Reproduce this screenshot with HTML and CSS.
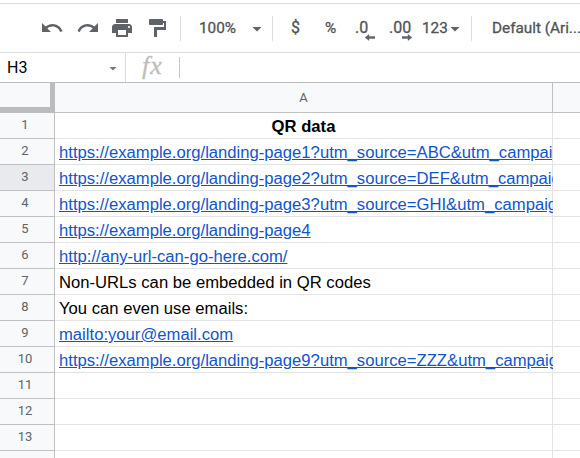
FILE: index.html
```
<!DOCTYPE html>
<html lang="en">
<head>
<meta charset="utf-8">
<title>Spreadsheet</title>
<link rel="stylesheet" href="styles.css">
</head>
<body>
<div class="toolbar">
  <svg class="icon undo" viewBox="0 0 24 24"><path d="M12.5 8c-2.65 0-5.05.99-6.9 2.6L2 7v9h9l-3.62-3.62c1.39-1.16 3.16-1.88 5.12-1.88 3.54 0 6.55 2.31 7.6 5.5l2.37-.78C21.08 11.03 17.15 8 12.5 8z"/></svg>
  <svg class="icon redo" viewBox="0 0 24 24"><path d="M18.4 10.6C16.55 8.99 14.15 8 11.5 8c-4.65 0-8.58 3.03-9.96 7.22L3.9 16c1.05-3.19 4.05-5.5 7.6-5.5 1.95 0 3.73.72 5.12 1.88L13 16h9V7l-3.6 3.6z"/></svg>
  <svg class="icon print" viewBox="0 0 24 24"><path d="M19 8H5c-1.66 0-3 1.34-3 3v6h4v4h12v-4h4v-6c0-1.66-1.34-3-3-3zm-3 11H8v-5h8v5zm3-7c-.55 0-1-.45-1-1s.45-1 1-1 1 .45 1 1-.45 1-1 1zm-1-9H6v4h12V3z"/></svg>
  <svg class="icon paint" viewBox="0 0 24 24"><path d="M18 5V4c0-.55-.45-1-1-1H5c-.55 0-1 .45-1 1v4c0 .55.45 1 1 1h12c.55 0 1-.45 1-1V7h1v4H9v10h3v-7h9V5h-3z"/></svg>
  <i class="divider"></i>
  <span class="label zoom">100%</span><i class="caret"></i>
  <i class="divider after-zoom"></i>
  <span class="label currency">$</span>
  <span class="label percent">%</span>
  <span class="label less">.0<svg class="arrow" viewBox="0 0 10 6"><path d="M0 3l4-3v2h6v2H4v2z"/></svg></span>
  <span class="label more">.00<svg class="arrow" viewBox="0 0 10 6"><path d="M10 3L6 0v2H0v2h6v2z"/></svg></span>
  <span class="label formats">123</span><i class="caret"></i>
  <i class="divider after-formats"></i>
  <span class="label font">Default (Ari...</span>
</div>
<div class="formula-bar">
  <span class="cell-name">H3</span><i class="caret small"></i>
  <i class="name-divider"></i>
  <span class="fx">fx</span>
  <i class="fx-divider"></i>
</div>
<div class="sheet">
  <div class="corner"></div><div class="col-head">A</div><div class="col-head"></div>
  <div class="row-head">1</div><div class="cell title">QR data</div><div class="cell"></div>
  <div class="row-head">2</div><div class="cell"><a>https://example.org/landing-page1?utm_source=ABC&amp;utm_campaig</a></div><div class="cell"></div>
  <div class="row-head active">3</div><div class="cell"><a>https://example.org/landing-page2?utm_source=DEF&amp;utm_campaig</a></div><div class="cell"></div>
  <div class="row-head">4</div><div class="cell"><a>https://example.org/landing-page3?utm_source=GHI&amp;utm_campaig</a></div><div class="cell"></div>
  <div class="row-head">5</div><div class="cell"><a>https://example.org/landing-page4</a></div><div class="cell"></div>
  <div class="row-head">6</div><div class="cell"><a>http://any-url-can-go-here.com/</a></div><div class="cell"></div>
  <div class="row-head">7</div><div class="cell">Non-URLs can be embedded in QR codes</div><div class="cell"></div>
  <div class="row-head">8</div><div class="cell">You can even use emails:</div><div class="cell"></div>
  <div class="row-head">9</div><div class="cell"><a>mailto:your@email.com</a></div><div class="cell"></div>
  <div class="row-head">10</div><div class="cell"><a>https://example.org/landing-page9?utm_source=ZZZ&amp;utm_campaig</a></div><div class="cell"></div>
  <div class="row-head">11</div><div class="cell"></div><div class="cell"></div>
  <div class="row-head">12</div><div class="cell"></div><div class="cell"></div>
  <div class="row-head">13</div><div class="cell"></div><div class="cell"></div>
  <div class="row-head"></div><div class="cell"></div><div class="cell"></div>
</div>
</body>
</html>
```
FILE: styles.css
```
* { box-sizing: border-box; }
body {
  margin: 0;
  height: 458px;
  overflow: hidden;
  background: #fff;
  font-family: "Liberation Sans", Arial, sans-serif;
}
.toolbar {
  display: flex;
  align-items: center;
  height: 50px;
  margin-top: 3px;
  border-top: 1px solid #dadce0;
  border-bottom: 1px solid #dadce0;
  padding-left: 40px;
  color: #505356;
  font: 400 15.3px Roboto, sans-serif;
  -webkit-text-stroke: .3px #505356;
  white-space: nowrap;
}
.toolbar > * { flex: none; }
.icon { width: 24px; height: 24px; fill: #5f6368; }
.redo { margin-left: 12px; }
.print { margin-left: 10px; }
.paint { margin-left: 11px; }
.divider { width: 1px; height: 25px; background: #dadce0; margin-left: 11px; }
.label { line-height: 20px; }
.zoom { width: 53px; margin-left: 18px; }
.caret {
  width: 10px;
  height: 5px;
  background: #5f6368;
  clip-path: polygon(0 0, 100% 0, 50% 100%);
  margin-top: 2px;
}
.after-zoom { margin-left: 10px; }
.currency { width: 34px; margin-left: 18px; font-size: 16px; }
.percent { width: 30px; }
.less, .more { position: relative; font-size: 16px; }
.less { width: 34px; }
.more { width: 33px; }
.arrow { position: absolute; width: 10px; height: 7px; fill: #5f6368; stroke: #5f6368; stroke-width: .4px; top: 16px; left: 10px; }
.more .arrow { left: 13px; }
.formats { width: 28px; }
.after-formats { margin-left: 11px; }
.font { margin-left: 20px; }
.formula-bar {
  display: flex;
  align-items: center;
  height: 30px;
  border-bottom: 1px solid #bdbdbd;
  padding-left: 7px;
}
.cell-name { width: 102px; font: 16px Roboto, sans-serif; color: #000; }
.small { width: 8px; height: 4px; background: #777; }
.name-divider { width: 1px; height: 29px; margin-left: 8px; background: #dadce0; }
.fx {
  width: 37px;
  margin-left: 16px;
  padding-bottom: 4px;
  font: italic 26px/24px "Liberation Serif", serif;
  letter-spacing: 1px;
  -webkit-text-stroke: .3px #bdbdbd;
  color: #bdbdbd;
}
.fx-divider { width: 1px; height: 21px; background: #c6c6c6; }
.sheet {
  display: grid;
  grid-template-columns: 55px 498px 28px;
  grid-template-rows: 30px;
  grid-auto-rows: 26px;
}
.corner { background: #f8f9fa; border-right: 5px solid #bcbcbc; border-bottom: 6px solid #bcbcbc; }
.col-head, .row-head {
  background: #f8f9fa;
  border-right: 1px solid #c0c0c0;
  border-bottom: 1px solid #c0c0c0;
  color: #5f6368;
  font: 13px/23px Roboto, sans-serif;
  text-align: center;
}
.col-head { line-height: 30px; }
.row-head { padding-right: 4px; }
.row-head.active { background: #e8eaed; }
.cell {
  min-width: 0;
  overflow: clip;
  overflow-clip-margin: 1px;
  border-right: 1px solid #e2e3e3;
  border-bottom: 1px solid #e2e3e3;
  padding: 0 0 0 4px;
  font-size: 16.65px;
  line-height: 28px;
  color: #000;
  white-space: nowrap;
}
.title { padding-right: 4px; font-weight: bold; text-align: center; }
.cell a { color: #1155cc; text-decoration: underline; }
```
